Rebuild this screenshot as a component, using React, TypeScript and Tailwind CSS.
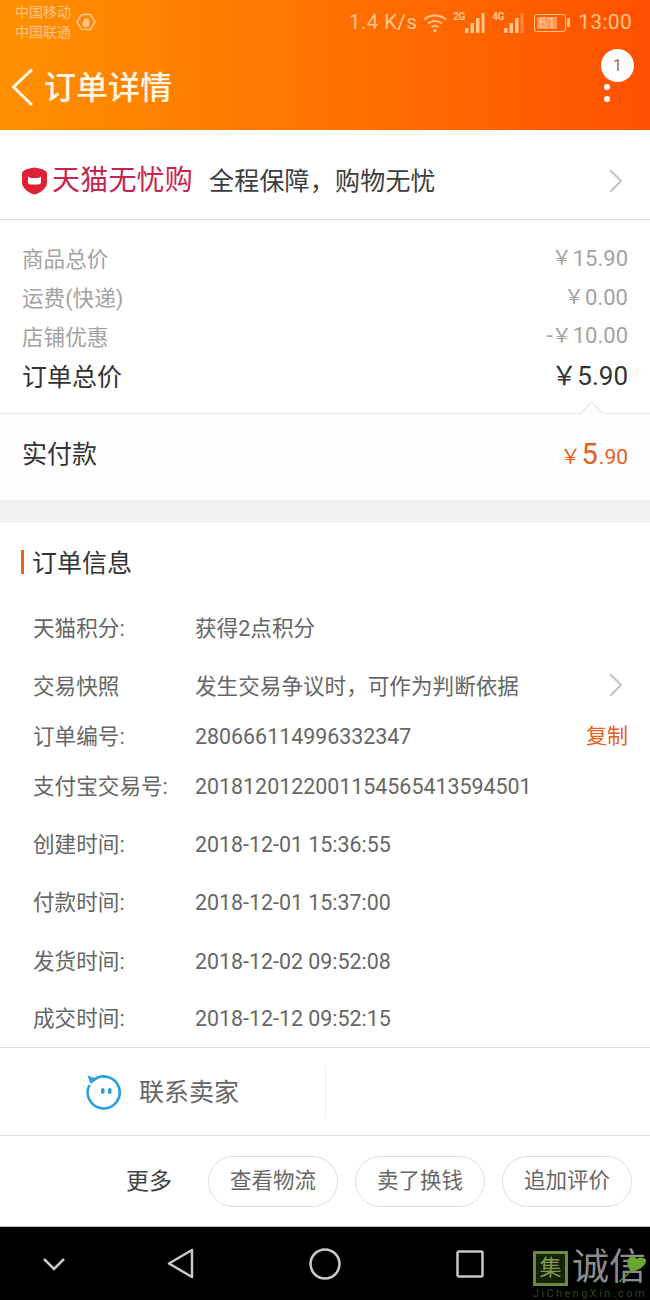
import { ChevronRight } from 'lucide-react';

const font = { fontFamily: '"Roboto", "Noto Sans CJK SC", sans-serif' };

const prices = [
  { label: '商品总价', value: '15.90', h: 'h-[39px]' },
  { label: '运费(快递)', value: '0.00', h: 'h-[39px]' },
  { label: '店铺优惠', value: '10.00', minus: true, h: 'h-[38px]' },
];

const infos = [
  { label: '天猫积分:', value: '获得2点积分', cjk: true, h: 'h-[59px]' },
  { label: '交易快照', value: '发生交易争议时，可作为判断依据', cjk: true, arrow: true, h: 'h-[56px]' },
  { label: '订单编号:', value: '280666114996332347', copy: true, h: 'h-[44px]' },
  { label: '支付宝交易号:', value: '2018120122001154565413594501', h: 'h-[56px]' },
  { label: '创建时间:', value: '2018-12-01 15:36:55', h: 'h-[60px]' },
  { label: '付款时间:', value: '2018-12-01 15:37:00', h: 'h-[57px]' },
  { label: '发货时间:', value: '2018-12-02 09:52:08', h: 'h-[60px]' },
  { label: '成交时间:', value: '2018-12-12 09:52:15', h: 'h-[55px]' },
];

function Signal({ tag, dim }: { tag: string; dim?: boolean }) {
  return (
    <div className="relative w-[32px] h-[20px]">
      <span className="absolute left-0 top-[-2px] text-[10px] font-bold leading-[11px] tracking-[-0.5px]">{tag}</span>
      <svg width="32" height="20" viewBox="0 0 32 20" className="absolute left-0 top-0">
        <g fill="currentColor">
          <rect x="12" y="15" width="3.500" height="5" />
          <rect x="17.500" y="10" width="3.500" height="10" />
          <rect x="23" y="5" width="3.500" height="15" />
          <rect x="28.500" y="0" width="3" height="20" opacity={dim ? 0.4 : 1} />
        </g>
      </svg>
    </div>
  );
}

function StatusBar() {
  return (
    <div className="h-[44px] flex items-center justify-between pl-[15px] pr-[18px] text-[#ffc48a]">
      <div className="flex items-center gap-[5px]">
        <div className="text-[14px] leading-[20px]">
          <div>中国移动</div>
          <div>中国联通</div>
        </div>
        <svg width="20" height="20" viewBox="0 0 20 20" fill="none">
          <path d="M5.500 2.500h9L19 10l-4.500 7.500h-9L1 10z" stroke="currentColor" strokeWidth="1.600" />
          <path d="M6.500 9.500v3c0 2 1.500 3 3.500 3s3.500-1 3.500-3v-4l-1 .5V6.500l-1-.5-.5 1-1-1-1 1-1-.5v3z" fill="currentColor" />
        </svg>
      </div>
      <div className="flex items-center mt-[1px]">
        <span className="text-[21px] tracking-[0.2px] mr-[6px]">1.4 K/s</span>
        <svg width="24" height="20" viewBox="0 0 24 20" fill="none" stroke="currentColor" strokeWidth="2" className="mr-[6px]">
          <path d="M1 6.500c6-5.500 16-5.500 22 0" />
          <path d="M5 10.500c4-3.500 10-3.500 14 0" />
          <path d="M8.500 14c2-1.500 5-1.500 7 0" />
          <circle cx="12" cy="17.500" r="1.800" fill="currentColor" stroke="none" />
        </svg>
        <Signal tag="2G" />
        <div className="w-[7px]" />
        <Signal tag="4G" dim />
        <div className="ml-[10px] mr-[8px] flex items-center">
          <div className="w-[32px] h-[18px] rounded-[3px] border border-[#ffc48a] p-[2px] flex">
            <div className="w-[20px] bg-[#ff9a5a] text-[15px] leading-[12px] flex items-center justify-center">61</div>
          </div>
          <div className="w-[3px] h-[9px] ml-[1px] bg-[#ffc48a]" />
        </div>
        <span className="text-[21px] tracking-[0.3px]">13:00</span>
      </div>
    </div>
  );
}

function Header() {
  return (
    <div className="h-[130px] bg-gradient-to-r from-[#ff9000] to-[#ff5000]">
      <StatusBar />
      <div className="relative h-[86px] flex items-center pl-[11px]">
        <svg width="24" height="40" viewBox="0 0 24 40" fill="none" stroke="#fff6e6" strokeWidth="3">
          <path d="M21 2.500 2.500 20 21 38" />
        </svg>
        <h1 className="ml-[9px] mt-[2px] text-[32px] leading-[40px] font-medium text-[#fff6e6]">订单详情</h1>
        <div className="absolute right-[16px] top-[5px] w-[33px] h-[33px] rounded-full bg-white flex items-center justify-center text-[16px] text-[#b5643a]">1</div>
        <div className="absolute right-[40px] top-[40px] w-[6px] h-[6px] rounded-full bg-white" />
        <div className="absolute right-[40px] top-[52px] w-[6px] h-[6px] rounded-full bg-white" />
      </div>
    </div>
  );
}

function Banner() {
  return (
    <div className="h-[90px] bg-white border-b border-[#dddddd] flex items-center pl-[21px] pr-[14px] pt-[14px]">
      <svg width="27" height="28" viewBox="0 0 27 28" className="mb-[2px]">
        <path d="M13.500 0.500C17 1 22 2 24 3.500c1.500 1 2 2 2 3.500V15c0 6-5.500 10.500-12.500 12.500C6.500 25.500 1 21 1 15V7c0-1.500.5-2.500 2-3.500C5 2 10 1 13.500 0.500z" fill="#dd2233" />
        <path d="M7 9.500c1.500 1.500 3 1.500 3.500 1.500h6c.5 0 2 0 3.500-1.500V15c0 1.500-1 2.500-2.500 2.500h-8C8 17.500 7 16.500 7 15z" fill="#fff" />
      </svg>
      <span className="ml-[4px] mb-[2px] text-[28px] leading-[36px] tracking-[0.2px] text-[#c9234f]">天猫无忧购</span>
      <span className="ml-[16px] text-[25px] leading-[32px] tracking-[0.2px] text-[#3d3d3d]">全程保障，购物无忧</span>
      <ChevronRight className="ml-auto mb-[2px] text-[#c4c4c4]" size={40} strokeWidth={1.200} />
    </div>
  );
}

function Prices() {
  return (
    <>
      <div className="h-[193px] bg-white pt-[20px] px-[22px]">
        {prices.map((p) => (
          <div key={p.label} className={`${p.h} flex items-center justify-between text-[#a3a3a3]`}>
            <span className="text-[21.600px] mt-[2px]">{p.label}</span>
            <span className="flex items-center text-[22px] mb-[3px]">
              {p.minus && <span className="mr-[-1px]">-</span>}
              <span className="text-[20px] mr-[1px]">￥</span>
              {p.value}
            </span>
          </div>
        ))}
        <div className="h-[42px] flex items-center justify-between text-[#333333]">
          <span className="text-[25px] mt-[2px]">订单总价</span>
          <span className="text-[26px] mb-[1px]">￥5.90</span>
        </div>
      </div>
      <div className="relative h-[87px] bg-[#fdfcfe] border-t border-[#e8e8e8] flex items-center justify-between px-[22px] pb-[5px]">
        <div className="absolute right-[50px] top-[-9px] w-[17px] h-[17px] rotate-45 bg-[#fdfcfe] border-l border-t border-[#e4e4e4]" />
        <span className="text-[25px] text-[#333333]">实付款</span>
        <span className="flex items-baseline text-[#e8601c]">
          <span className="text-[20px] mr-[1px]">￥</span>
          <span className="text-[29px]">5</span>
          <span className="text-[21px] ml-[1px]">.90</span>
        </span>
      </div>
      <div className="h-[23px] bg-[#f2f2f4]" />
    </>
  );
}

function OrderInfo() {
  return (
    <div className="h-[525px] bg-white border-b border-[#dcdcdc]">
      <div className="h-[77px] flex items-center pl-[21px]">
        <div className="w-[3px] h-[24px] bg-[#e8641e] mt-[1px]" />
        <h2 className="ml-[8px] text-[25px] mt-[5px] text-[#333333]">订单信息</h2>
      </div>
      {infos.map((r) => (
        <div key={r.label} className={`${r.h} flex items-center pl-[33px] pr-[22px] text-[#666666]`}>
          <span className="w-[162px] text-[21.600px] whitespace-nowrap">{r.label}</span>
          <span className={`${r.cjk ? 'text-[21.600px]' : 'text-[21.400px]'} whitespace-nowrap`}>{r.value}</span>
          {r.arrow && <ChevronRight className="ml-auto mr-[-8px] mb-[4px] text-[#c4c4c4]" size={40} strokeWidth={1.200} />}
          {r.copy && <span className="ml-auto text-[21px] text-[#e8601c]">复制</span>}
        </div>
      ))}
    </div>
  );
}

function Contact() {
  return (
    <div className="h-[88px] bg-white border-b border-[#e4e4e4] flex items-center">
      <div className="w-[326px] h-[52px] border-r border-[#ececec] flex items-center pl-[86px] pt-[1px]">
        <svg width="36" height="36" viewBox="0 0 36 36" fill="none">
          <path d="M7 6.500A16 16 0 1 1 3.500 11" stroke="#2c9fdc" strokeWidth="2.600" />
          <path d="M1.500 1.500 11 5 4.500 10z" fill="#2c9fdc" />
          <rect x="15" y="14" width="3.500" height="6" rx="1.700" fill="#2c9fdc" />
          <rect x="22" y="14" width="3.500" height="6" rx="1.700" fill="#2c9fdc" />
        </svg>
        <span className="ml-[17px] mt-[1px] text-[25px] text-[#666666]">联系卖家</span>
      </div>
    </div>
  );
}

function Actions() {
  return (
    <div className="h-[91px] bg-white border-b border-[#bbbbbb] flex items-center justify-end gap-[17px] pr-[18px]">
      <span className="mr-[19px] mt-[2px] text-[23px] text-[#444444]">更多</span>
      {['查看物流', '卖了换钱', '追加评价'].map((t) => (
        <button key={t} className="w-[130px] h-[51px] pt-[1px] rounded-full border border-[#dedede] text-[21.500px] text-[#666666]">
          {t}
        </button>
      ))}
    </div>
  );
}

function NavBar() {
  return (
    <div className="relative h-[73px] bg-black flex items-center pl-[42px] text-[#c8c8c8]">
      <svg width="24" height="14" viewBox="0 0 24 14" fill="none" stroke="currentColor" strokeWidth="2.500" className="mr-[101px]">
        <path d="M2 2l10 10L22 2" />
      </svg>
      <svg width="27" height="31" viewBox="0 0 27 31" fill="none" stroke="currentColor" strokeWidth="2.500" strokeLinejoin="round" className="mr-[115px]">
        <path d="M25 2 2 15.500 25 29z" />
      </svg>
      <svg width="32" height="32" viewBox="0 0 32 32" fill="none" stroke="currentColor" strokeWidth="2.500" className="mr-[115px]">
        <circle cx="16" cy="16" r="14.500" />
      </svg>
      <svg width="28" height="28" viewBox="0 0 28 28" fill="none" stroke="currentColor" strokeWidth="2.500" strokeLinejoin="round">
        <rect x="1.500" y="1.500" width="25" height="25" rx="1.500" />
      </svg>
      <div className="absolute left-[533px] top-[23px] w-[117px]">
        <div className="relative flex items-center">
          <div className="w-[35px] h-[35px] border-[3px] border-[#6b8a3c] bg-[#16210a] flex items-center justify-center text-[22px] leading-none text-[#7f9c4c]">集</div>
          <span className="ml-[4px] text-[37px] leading-[36px] text-[#8c8c8c] whitespace-nowrap">诚信</span>
          <svg width="30" height="30" viewBox="0 0 30 30" className="absolute left-[85px] top-[4px]">
            <path d="M13 18C9 12 8 6 12 3c3-2 6 0 7 2 2-2 7-2 9 1 1 4-5 10-15 12z" fill="#6aa531" />
            <path d="M13 17 1 28" stroke="#6aa531" strokeWidth="1.200" fill="none" />
          </svg>
        </div>
        <div className="mt-[2px] text-[11px] leading-[12px] tracking-[2.400px] text-[#2a4a12] whitespace-nowrap">JiChengXin.com</div>
      </div>
    </div>
  );
}

export default function App() {
  return (
    <div className="w-[650px] h-[1300px] overflow-hidden bg-white" style={font}>
      <Header />
      <Banner />
      <Prices />
      <OrderInfo />
      <Contact />
      <Actions />
      <NavBar />
    </div>
  );
}
